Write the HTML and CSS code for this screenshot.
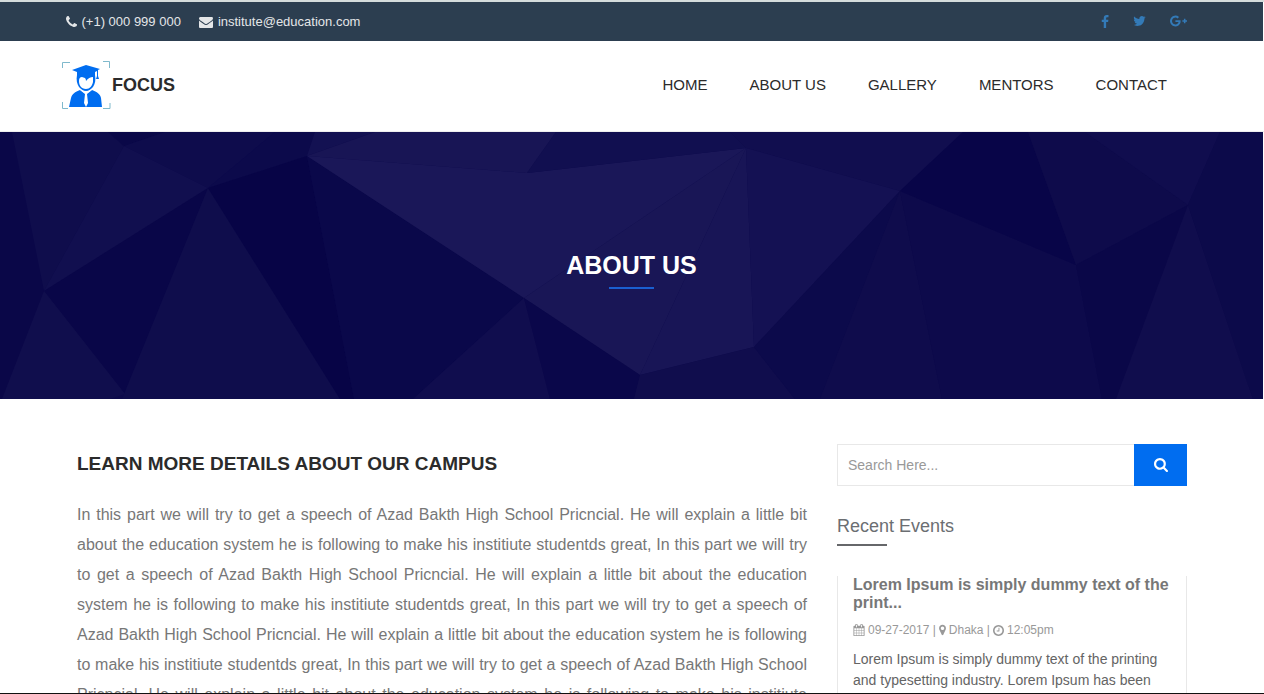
FILE: index.html
```html
<!DOCTYPE html>
<html lang="en">
<head>
<meta charset="utf-8">
<meta name="viewport" content="width=device-width, initial-scale=1">
<title>Focus - About Us</title>
<link rel="stylesheet" href="styles.css">
</head>
<body>
<div class="page">
  <div class="topbar">
    <div class="container topbar-inner">
      <ul class="contact-list">
        <li class="contact-item"><svg class="icon" width="11" height="14" viewBox="192 0 1408 1792" aria-hidden="true"><path d="M1600 1240q0 27-10 70.500t-21 68.500q-21 50-122 106-94 51-186 51-27 0-53-3.500t-57.500-12.500-47-14.500-55.500-20.500-49-18q-98-35-175-83-127-79-264-216t-216-264q-48-77-83-175-3-9-18-49t-20.500-55.500-14.500-47-12.500-57.500-3.500-53q0-92 51-186 56-101 106-122 25-11 68.500-21t70.500-10q14 0 21 3 18 6 53 76 11 19 30 54t35 63.500 31 53.500q3 4 17.500 25t21.500 35.500 7 28.500q0 20-28.500 50t-62 55-62 53-28.500 46q0 9 5 22.500t8.500 20.500 14 24 11.500 19q76 137 174 235t235 174q2 1 19 11.500t24 14 20.500 8.500 22.500 5q18 0 46-28.500t53-62 55-62 50-28.500q14 0 28.500 7t35.500 21.500 25 17.500q25 15 53.500 31t63.500 35 54 30q70 35 76 53 3 7 3 21z"/></svg><span>(+1) 000 999 000</span></li>
        <li class="contact-item"><svg class="icon" width="14" height="14" viewBox="0 0 1792 1792" aria-hidden="true"><path d="M1792 710v794q0 66-47 113t-113 47h-1472q-66 0-113-47t-47-113v-794q44 49 101 87 362 246 497 345 57 42 92.500 65.500t94.500 48 110 24.500h2q51 0 110-24.500t94.500-48 92.500-65.500q170-123 498-345 57-39 100-87zm0-294q0 79-49 151t-122 123q-376 261-468 325-10 7-42.500 31t-54 38.500-52 32.500-57.500 27-50 9h-2q-23 0-50-9t-57.500-27-52-32.500-54-38.500-42.500-31q-91-64-262-182.500t-205-142.500q-62-42-117-115.500t-55-136.500q0-78 41.500-130t118.500-52h1472q65 0 112.500 47t47.500 113z"/></svg><span>institute@education.com</span></li>
      </ul>
      <div class="social">
        <a class="social-link" href="#" aria-label="Facebook"><svg class="icon" width="8" height="14" viewBox="384 0 1024 1792"><path d="M1343 140v264h-157q-86 0-116 36t-30 108v189h293l-39 296h-254v759h-306v-759h-255v-296h255v-218q0-186 104-288.500t277-102.500q147 0 228 12z"/></svg></a>
        <a class="social-link" href="#" aria-label="Twitter"><svg class="icon" width="13" height="14" viewBox="64 0 1664 1792"><path d="M1684 408q-67 98-162 167 1 14 1 42 0 130-38 259.500t-115.500 248.500-184.500 210.500-258 146-323 54.500q-271 0-496-145 35 4 78 4 225 0 401-138-105-2-188-64.500t-114-159.500q33 5 61 5 43 0 85-11-112-23-185.500-111.500t-73.500-205.500v-4q68 38 146 41-66-44-105-115t-39-154q0-88 44-163 121 149 294.500 238.500t371.500 99.500q-8-38-8-74 0-134 94.500-228.500t228.500-94.500q140 0 236 102 109-21 205-78-37 115-142 178 93-10 186-50z"/></svg></a>
        <a class="social-link" href="#" aria-label="Google Plus"><svg class="icon" width="17" height="14" viewBox="0 0 2304 1792"><path d="M1437 913q0 208-87 370.500t-248 254-369 91.500q-149 0-285-58t-234-156-156-234-58-285 58-285 156-234 234-156 285-58q286 0 491 192l-199 191q-117-113-292-113-123 0-227.500 62t-165.500 168.500-61 232.500 61 232.500 165.500 168.500 227.500 62q83 0 152.500-23t114.500-57.500 78.500-78.500 49-83 21.500-74h-416v-252h692q12 63 12 122zm867-122v210h-209v209h-210v-209h-209v-210h209v-209h210v209h209z"/></svg></a>
      </div>
    </div>
  </div>

  <header class="header">
    <div class="container header-inner">
      <a class="brand" href="#">
        <svg class="brand-mark" width="50" height="50" viewBox="0 0 50 50" aria-hidden="true">
          <g fill="none" stroke="#7fb9cc" stroke-width="1"><path d="M.5 8V2.500H8M41 1.500h6.500V8M.5 42v6.500H6M41 48.500h7V43"/></g>
          <g fill="#006df0">
            <path d="M24 5 10 10l5 2v5l2-1q7-3 14 0l2 1v-5l2-1v5l-1 3h3l-1-3v-6l2-1z"/>
            <path fill-rule="evenodd" d="M15 15c-1 5 0 9 2 12 2 2 4 4 7 4s5-2 7-4c2-3 3-7 2-12l-9-2zM17 21q0-4 3-4l3 1q1 1 1 3 3-4 7-4v5c-1 4-3 7-7 7-5 0-7-4-7-8z"/>
            <path d="M18 30c-5 2-8 4-9 8L7 47h33l-1-9c-1-4-4-6-9-8l-6 4z"/>
          </g>
          <path fill="#fff" d="m18 30 4 1h4l4-1-5 4 1 9-2 4-2-4 1-9z"/>
        </svg>
        <span class="brand-name">FOCUS</span>
      </a>
      <nav class="nav" aria-label="Main">
        <a class="nav-link" href="#">HOME</a>
        <a class="nav-link" href="#">ABOUT US</a>
        <a class="nav-link" href="#">GALLERY</a>
        <a class="nav-link" href="#">MENTORS</a>
        <a class="nav-link" href="#">CONTACT</a>
      </nav>
    </div>
  </header>

  <section class="hero">
    <svg class="hero-art" viewBox="0 132 1263 267" preserveAspectRatio="xMidYMid slice" aria-hidden="true">
      <path fill="#0a0748" d="M0 132h12l32 159L2 399H0z"/>
      <path fill="#0f0d4c" d="M12 132h96l16 14L44 291z"/>
      <path fill="#110f4f" d="m124 146 84 42L44 291z"/>
      <path fill="#0a0848" d="M108 132h57l-41 14z"/>
      <path fill="#0e0c4c" d="M165 132h110l-67 56-84-42z"/>
      <path fill="#0c0a4b" d="M275 132h40l-8 24-99 32z"/>
      <path fill="#090648" d="m44 291 164-103-83 206z"/>
      <path fill="#100e4d" d="m44 291 81 103-15 5H2z"/>
      <path fill="#0f0d4c" d="m208 188 132 211H122z"/>
      <path fill="#070446" d="m208 188 99-32 47 243h-14z"/>
      <path fill="#0a084a" d="m307 156 217 142-111 101h-59z"/>
      <path fill="#131152" d="M315 132h60l-68 24z"/>
      <path fill="#181555" d="M375 132h181l-29 41-220-17z"/>
      <path fill="#1a1758" d="m307 156 220 17 219-25-222 150z"/>
      <path fill="#191656" d="M746 148 524 298l116 77z"/>
      <path fill="#181556" d="M746 148 640 375l114-28z"/>
      <path fill="#110f50" d="M556 132h174l16 16-219 25z"/>
      <path fill="#110e4f" d="M730 132h233l-63 59-154-43z"/>
      <path fill="#141153" d="m746 148 154 43-146 156z"/>
      <path fill="#100d4e" d="M524 298 413 399h137z"/>
      <path fill="#0a074a" d="m524 298 26 101h84l6-24z"/>
      <path fill="#100d4d" d="m640 375 114-28 41 52H634z"/>
      <path fill="#0c0a4b" d="m754 347 146-156-80 208h-25z"/>
      <path fill="#0f0c4c" d="m900 191 42 208H820z"/>
      <path fill="#0d0a4b" d="m900 191 176 74 26 134H942z"/>
      <path fill="#080548" d="M963 132h65l48 133-176-74z"/>
      <path fill="#0e0b4b" d="M1028 132h57l103 73-112 60z"/>
      <path fill="#100d4e" d="M1085 132h135l-32 73z"/>
      <path fill="#0a0748" d="m1076 265 112-60-72 194h-14z"/>
      <path fill="#100d4d" d="m1188 205-72 194h137z"/>
      <path fill="#0c0a4a" d="M1220 132h43v267h-10l-65-194z"/>
    </svg>
    <h1 class="hero-title">ABOUT US</h1>
  </section>

  <main class="container content">
    <article class="article">
      <h2 class="article-title">LEARN MORE DETAILS ABOUT OUR CAMPUS</h2>
      <p class="article-text">In this part we will try to get a speech of Azad Bakth High School Pricncial. He will explain a little bit about the education system he is following to make his institiute studentds great, In this part we will try to get a speech of Azad Bakth High School Pricncial. He will explain a little bit about the education system he is following to make his institiute studentds great, In this part we will try to get a speech of Azad Bakth High School Pricncial. He will explain a little bit about the education system he is following to make his institiute studentds great, In this part we will try to get a speech of Azad Bakth High School Pricncial. He will explain a little bit about the education system he is following to make his institiute</p>
    </article>
    <aside class="sidebar">
      <form class="search">
        <input class="search-input" type="text" placeholder="Search Here..." aria-label="Search">
        <button class="search-button" type="button" aria-label="Submit search"><svg class="icon" width="14" height="14" viewBox="64 128 1664 1664" aria-hidden="true"><path d="M1216 832q0-185-131.500-316.500t-316.500-131.500-316.500 131.500-131.500 316.500 131.500 316.500 316.500 131.500 316.500-131.500 131.500-316.500zm512 832q0 52-38 90t-90 38q-54 0-90-38l-343-342q-179 124-399 124-143 0-273.500-55.500t-225-150-150-225-55.500-273.500 55.500-273.500 150-225 225-150 273.500-55.500 273.500 55.500 225 150 150 225 55.500 273.500q0 220-124 399l343 343q37 37 37 90z"/></svg></button>
      </form>
      <h3 class="sidebar-title">Recent Events</h3>
      <div class="event">
        <h4 class="event-title">Lorem Ipsum is simply dummy text of the print...</h4>
        <div class="event-meta">
          <svg class="icon" width="12" height="12" viewBox="0 0 1664 1792" aria-hidden="true"><path fill-rule="evenodd" d="M0 384q0-128 128-128h128v-96q0-160 160-160h64q160 0 160 160v96h384v-96q0-160 160-160h64q160 0 160 160v96h128q128 0 128 128v1280q0 128-128 128H128q-128 0-128-128zM128 640v288h288V640zM480 640v288h320V640zM864 640v288h320V640zM1248 640v288h288V640zM128 992v320h288V992zM480 992v320h320V992zM864 992v320h320V992zM1248 992v320h288V992zM128 1376v288h288v-288zM480 1376v288h320v-288zM864 1376v288h320v-288zM1248 1376v288h288v-288zM384 128v352h128V128zM1152 128v352h128V128z"/></svg>
          <span>09-27-2017 |</span>
          <svg class="icon" width="7" height="12" viewBox="384 0 1024 1792" aria-hidden="true"><path d="M1152 640q0-106-75-181t-181-75-181 75-75 181 75 181 181 75 181-75 75-181zm256 0q0 109-33 179l-364 774q-16 33-47.500 52t-67.500 19-67.500-19-46.500-52l-365-774q-33-70-33-179 0-212 150-362t362-150 362 150 150 362z"/></svg>
          <span>Dhaka |</span>
          <svg class="icon" width="11" height="13" viewBox="128 0 1536 1792" aria-hidden="true"><path d="M1024 544v448q0 14-9 23t-23 9h-320q-14 0-23-9t-9-23v-64q0-14 9-23t23-9h224v-352q0-14 9-23t23-9h64q14 0 23 9t9 23zm416 352q0-148-73-273t-198-198-273-73-273 73-198 198-73 273 73 273 198 198 273 73 273-73 198-198 73-273zm224 0q0 209-103 385.500t-279.500 279.500-385.500 103-385.500-103-279.500-279.500-103-385.500 103-385.500 279.500-279.500 385.500-103 385.500 103 279.500 279.500 103 385.500z"/></svg>
          <span>12:05pm</span>
        </div>
        <p class="event-text">Lorem Ipsum is simply dummy text of the printing and typesetting industry. Lorem Ipsum has been</p>
      </div>
    </aside>
  </main>
</div>
</body>
</html>
```
FILE: styles.css
```css
* { box-sizing: border-box; }

body {
  margin: 0;
  background: #fff;
  color: #777;
  font-family: "Liberation Sans", Arial, sans-serif;
  font-size: 14px;
}

h1, h2, h3, h4, p, ul { margin: 0; padding: 0; }
a { color: inherit; text-decoration: none; }

.page {
  height: 100vh;
  overflow: hidden;
  border-top: 2px solid #d5dcdc;
  border-bottom: 1px solid #111;
}

.icon { display: block; flex: none; fill: currentColor; }

.container {
  width: 100%;
  max-width: 1170px;
  margin: 0 auto;
  padding: 0 15px;
}

.topbar { margin-right: 1px; background: #2c3e50; color: #e4e6e8; }

.topbar-inner {
  display: flex;
  align-items: center;
  justify-content: space-between;
  min-height: 39px;
  padding: 0 30px 0 19px;
}

.contact-list { display: flex; gap: 18px; list-style: none; }
.contact-item { display: flex; align-items: center; gap: 5px; font-size: 13px; line-height: 18px; }

.social { display: flex; align-items: center; gap: 24px; padding-bottom: 1px; color: #337ab7; }

.header { border-bottom: 1px solid #eee; }

.header-inner {
  display: flex;
  align-items: center;
  justify-content: space-between;
  min-height: 90px;
  padding-right: 50px;
  padding-bottom: 2px;
}

.brand { display: flex; align-items: center; color: #2b2b2b; }
.brand-name { font-size: 18px; font-weight: bold; line-height: 24px; }

.nav { display: flex; gap: 42px; color: #2b2b2b; font-size: 15px; line-height: 20px; }

.hero {
  position: relative;
  display: flex;
  flex-direction: column;
  align-items: center;
  margin-right: 1px;
  padding: 118px 16px 110px;
  background: #0d0a4b;
  color: #fff;
}

.hero-art { position: absolute; inset: 0; width: 100%; height: 100%; }

.hero-title { position: relative; font-size: 25px; line-height: 30px; }

.hero-title::after {
  content: "";
  display: block;
  width: 45px;
  height: 2px;
  margin: 7px auto 0;
  background: #1a5fd0;
}

.content {
  display: grid;
  grid-template-columns: minmax(0, 1fr) 350px;
  gap: 30px;
  padding: 45px 30px;
}

.article-title { padding-top: 8px; color: #2b2b2b; font-size: 19px; line-height: 24px; }
.article-text { margin-top: 24px; font-size: 16px; line-height: 30px; text-align: justify; text-align-last: justify; }

.search { display: flex; }

.search-input {
  flex: 1;
  min-width: 0;
  height: 42px;
  padding: 0 10px;
  border: 1px solid #e8e8e8;
  border-right: 0;
  border-radius: 0;
  background: #fff;
  color: #777;
  font: 14px "Liberation Sans", Arial, sans-serif;
}

.search-input::placeholder { color: #999; opacity: 1; }

.search-button {
  display: flex;
  align-items: center;
  justify-content: center;
  width: 53px;
  padding: 0;
  border: 0;
  background: #006df0;
  color: #fff;
}

.sidebar-title { margin-top: 28px; font-size: 18px; font-weight: normal; line-height: 24px; color: #6b6e72; }

.sidebar-title::after {
  content: "";
  display: block;
  width: 50px;
  height: 2px;
  margin-top: 6px;
  background: #66676a;
}

.event {
  margin-top: 30px;
  padding: 0 15px 20px;
  border: solid #e8e8e8;
  border-width: 0 1px;
}

.event-title { font-size: 16px; line-height: 18px; color: #777; }

.event-meta {
  display: flex;
  align-items: center;
  gap: 3px;
  margin-top: 9px;
  color: #999;
  font-size: 12px;
  line-height: 18px;
}

.event-text { margin-top: 10px; color: #646464; font-size: 14px; line-height: 21px; }

@media (max-width: 900px) {
  .page { height: auto; }
  .content { grid-template-columns: minmax(0, 1fr); }
  .header-inner, .topbar-inner { flex-wrap: wrap; padding: 8px 15px; }
  .nav { flex-wrap: wrap; gap: 16px; }
}
```
